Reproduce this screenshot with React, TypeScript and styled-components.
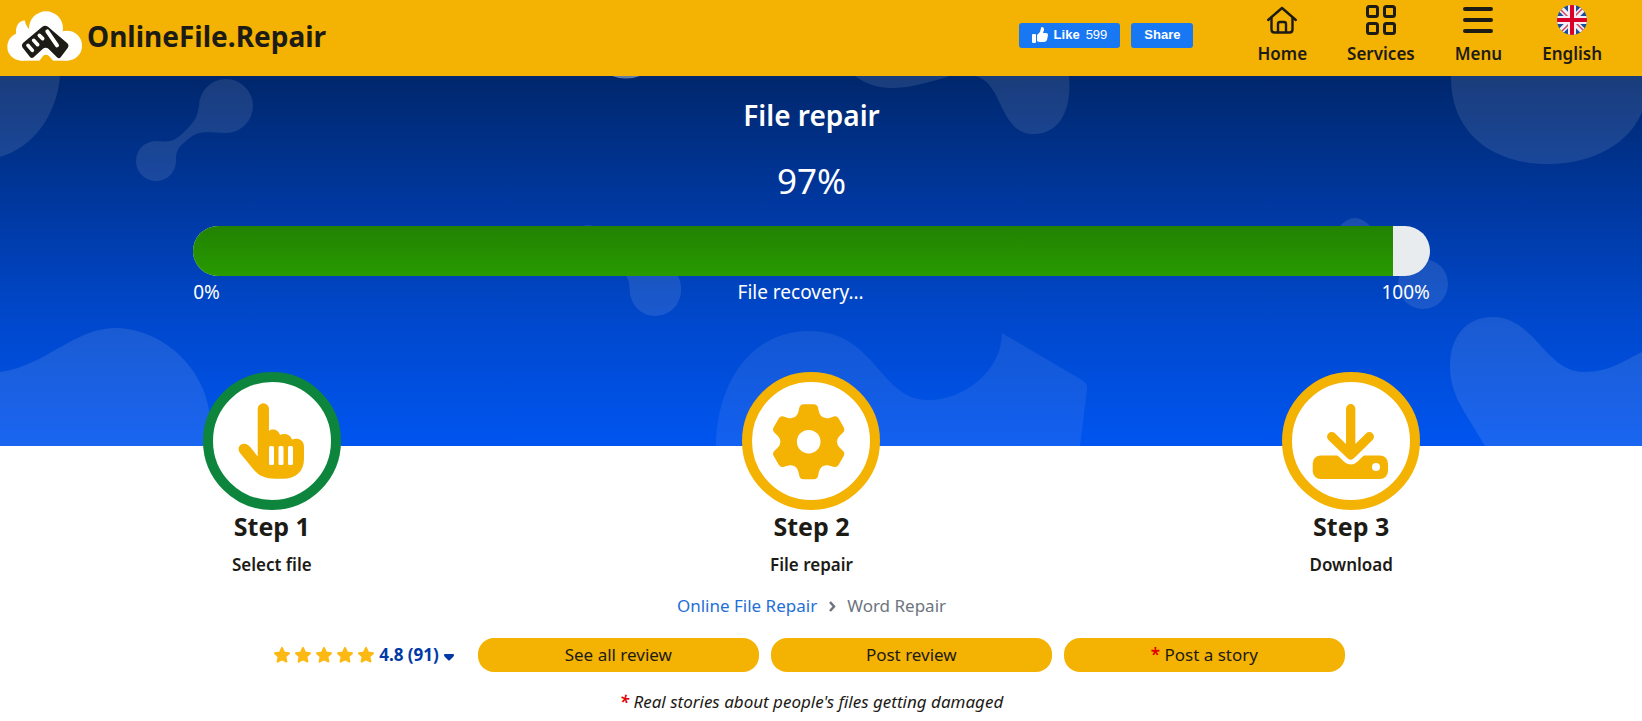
import React from "react";
import styled, { createGlobalStyle } from "styled-components";

const YELLOW = "#f4b202";
const INK = "#1d1b16";

const GlobalStyle = createGlobalStyle`
  *, *::before, *::after { box-sizing: border-box; }
  body {
    margin: 0;
    background: #fff;
    color: ${INK};
    font-family: "Segoe UI", "Noto Sans", "Open Sans", sans-serif;
    font-size: 17px;
    line-height: 24px;
  }
  button { font: inherit; color: inherit; border: 0; cursor: pointer; }
  a { color: inherit; text-decoration: none; }
`;

/* ---------- header ---------- */

const Header = styled.header`
  display: flex;
  align-items: center;
  min-height: 76px;
  padding: 0 40px 0 7px;
  background: ${YELLOW};
`;

const Brand = styled.a`
  display: flex;
  align-items: center;
  gap: 5px;
  margin-right: auto;
  padding-bottom: 4px;
  font-size: 28px;
  line-height: 40px;
  font-weight: 700;
`;

const Social = styled.div`
  display: flex;
  gap: 11px;
  margin: 0 64px 6px 0;
`;

const SocialButton = styled.button`
  display: flex;
  align-items: center;
  justify-content: center;
  gap: 6px;
  height: 25px;
  padding: 0 13px;
  border-radius: 3px;
  background: #1877f2;
  color: #fff;
  font-family: "Liberation Sans", Arial, sans-serif;
  font-size: 13px;
  font-weight: 700;
`;

const Count = styled.span`
  font-weight: 400;
`;

const Nav = styled.nav`
  display: flex;
  align-items: flex-start;
  gap: 40px;
  padding-bottom: 5px;
`;

const NavLink = styled.a`
  display: flex;
  flex-direction: column;
  align-items: center;
  gap: 7px;
  font-size: 17px;
  line-height: 24px;
  font-weight: 600;
`;

/* ---------- hero ---------- */

const Hero = styled.section`
  position: relative;
  min-height: 370px;
  padding: 19px 19px 0 0;
  background: linear-gradient(#00276c, #0038a0 35%, #0048cc 66%, #0055f0);
  color: #fff;
  text-align: center;
`;

const Backdrop = styled.svg`
  position: absolute;
  inset: 0;
  width: 100%;
  height: 100%;
`;

const HeroBody = styled.div`
  position: relative;
  width: 76.2%;
  margin: 0 auto;
`;

const Title = styled.h1`
  margin: 0;
  font-size: 28px;
  line-height: 40px;
  font-weight: 600;
`;

const Percent = styled.div`
  margin: 21px 0 20px;
  font-size: 35px;
  line-height: 50px;
`;

const Track = styled.div`
  height: 50px;
  overflow: hidden;
  border-radius: 25px;
  background: #e9ecef;
`;

const Fill = styled.div`
  height: 100%;
  background: linear-gradient(#228202, #289a00);
`;

const Scale = styled.div`
  display: flex;
  justify-content: space-between;
  padding-top: 4px;
  font-size: 19px;
  line-height: 24px;
`;

/* ---------- steps ---------- */

const Main = styled.main`
  padding-right: 19px;
`;

const Steps = styled.ol`
  position: relative;
  display: grid;
  grid-template-columns: repeat(3, 1fr);
  margin: -74px 0 0;
  padding: 0 2px;
  list-style: none;
  text-align: center;
`;

const Step = styled.li`
  display: flex;
  flex-direction: column;
  align-items: center;
`;

const Ring = styled.div<{ $done?: boolean }>`
  width: 138px;
  height: 138px;
  border: 10px solid ${(p) => (p.$done ? "#0e853d" : YELLOW)};
  border-radius: 50%;
  background: #fff;
  svg { display: block; }
`;

const StepName = styled.h2`
  margin: 0;
  font-size: 25px;
  line-height: 32px;
  font-weight: 700;
`;

const StepText = styled.p`
  margin: 11px 0 0;
  font-size: 17px;
  line-height: 24px;
  font-weight: 600;
`;

/* ---------- footer rows ---------- */

const Crumbs = styled.nav`
  display: flex;
  justify-content: center;
  align-items: center;
  gap: 9px;
  padding-top: 17px;
  color: #6c757d;
  a { color: #1f6fd6; }
`;

const Reviews = styled.div`
  display: flex;
  justify-content: center;
  align-items: center;
  gap: 12px;
  padding: 20px 4px 0 0;
`;

const Rating = styled.button`
  display: flex;
  align-items: center;
  gap: 5px;
  margin-right: 12px;
  padding: 0;
  background: none;
  color: #0039a6;
  font-weight: 700;
`;

const Stars = styled.span`
  display: flex;
  gap: 5px;
`;

const ReviewButton = styled.button`
  width: 281px;
  height: 34px;
  border-radius: 16px;
  background: ${YELLOW};
`;

const Star = styled.span`
  color: #e00000;
  font-weight: 600;
`;

const Note = styled.p`
  margin: 0;
  padding-top: 18px;
  font-style: italic;
  text-align: center;
`;

/* ---------- drawings ---------- */

const Logo = () => (
  <svg width="75" height="50" viewBox="21 31 225 150" aria-hidden="true">
    <g fill="#fff">
      <circle cx="138" cy="83" r="51" />
      <circle cx="201" cy="135" r="45" />
      <circle cx="64" cy="138" r="42" />
      <path d="M48 102 C46 72 58 62 74 59 Q76 72 84 82 L110 110 Z" />
      <rect x="62" y="96" width="140" height="84" />
    </g>
    <path d="M118 181 L129 166 Q137 158 147 166 L160 181 Z" fill={YELLOW} />
    <path
      d="M127 78 Q135 72 144 78 L202 128 Q208 134 203 142 L182 170 Q177 176 171 170 L146 145 Q137 138 128 145 L101 170 Q95 175 90 169 L67 140 Q63 133 69 127 Z"
      fill={INK}
    />
    <g stroke="#fff" strokeLinecap="round" fill="none">
      <path d="M84 134 L97 149" strokeWidth="11" />
      <path d="M101 119 L113 132" strokeWidth="11" />
      <path d="M118 104 L128 114" strokeWidth="11" />
      <path d="M142 92 L171 134" strokeWidth="12" />
    </g>
  </svg>
);

const HomeIcon = () => (
  <svg width="30" height="30" viewBox="0 0 30 30" fill="none" stroke={INK} strokeWidth="2.4" strokeLinecap="round" strokeLinejoin="round" aria-hidden="true">
    <path d="M1.2 15 L15 3 L28.8 15" />
    <path d="M4.5 13 V24.5 Q4.5 27.5 7.5 27.5 H22.5 Q25.5 27.5 25.5 24.5 V13" />
    <path d="M11 27 V19 Q11 17 13 17 H17 Q19 17 19 19 V27" />
  </svg>
);

const ServicesIcon = () => (
  <svg width="30" height="30" viewBox="0 0 30 30" fill="none" stroke={INK} strokeWidth="3" aria-hidden="true">
    <rect x="1.5" y="1.5" width="10" height="10" rx="2" />
    <rect x="18.5" y="1.5" width="10" height="10" rx="2" />
    <rect x="1.5" y="18.5" width="10" height="10" rx="2" />
    <rect x="18.5" y="18.5" width="10" height="10" rx="2" />
  </svg>
);

const MenuIcon = () => (
  <svg width="30" height="30" viewBox="0 0 30 30" stroke={INK} strokeWidth="4" strokeLinecap="round" aria-hidden="true">
    <path d="M2 4 H28 M2 15 H28 M2 26 H28" />
  </svg>
);

const FlagIcon = () => (
  <svg width="30" height="30" viewBox="0 0 30 30" aria-hidden="true">
    <clipPath id="flag-round">
      <circle cx="15" cy="15" r="15" />
    </clipPath>
    <g clipPath="url(#flag-round)">
      <rect width="30" height="30" fill="#1b4f9c" />
      <path d="M0 0 L30 30 M30 0 L0 30" stroke="#f4eef4" strokeWidth="6" />
      <path d="M0 1 L15 16 M30 29 L15 14 M29 0 L14 15 M1 30 L16 15" stroke="#d0455f" strokeWidth="1.5" />
      <path d="M15 0 V30 M0 15 H30" stroke="#f4eef4" strokeWidth="8" />
      <path d="M15 0 V30 M0 15 H30" stroke="#d80027" strokeWidth="4" />
    </g>
  </svg>
);

const ThumbIcon = () => (
  <svg width="16" height="16" viewBox="0 0 16 16" fill="#fff" aria-hidden="true">
    <rect x="0" y="7" width="4" height="9" rx="1" />
    <path d="M5 14 V8 L8 5 L9 1 Q9 0 10 0 Q12 0 12 3 L11 6 H14 Q16 6 16 8 L15 13 Q14 15 12 15 H8 Q6 15 5 14 Z" />
  </svg>
);

const HandIcon = () => (
  <svg width="118" height="118" viewBox="0 0 118 118" aria-hidden="true">
    <path
      d="M44.7 27 A5.65 5.65 0 0 1 56 27 V49 C59 46.5 65 47 67 53 C71 51 77 52 79 57.5 C84 55.5 91 57 91 65 V77 C91 90 82 96.7 70 96.7 H62 C53 96.7 46 94 41 88 L27 71 C24 67 26 62 31 61.8 C34 61.8 36 63.5 38 66 L44.7 74.5 Z"
      fill={YELLOW}
    />
    <g fill="#fff">
      <rect x="56" y="64" width="5" height="19" rx="1.5" />
      <rect x="65.5" y="64" width="5" height="19" rx="1.5" />
      <rect x="75" y="64" width="5" height="19" rx="1.5" />
    </g>
  </svg>
);

const GearIcon = () => (
  <svg width="118" height="118" viewBox="0 0 118 118" aria-hidden="true">
    <g transform="translate(56.7 59.7)" fill={YELLOW}>
      <circle r="27" />
      {[0, 60, 120, 180, 240, 300].map((angle) => (
        <path
          key={angle}
          transform={`rotate(${angle})`}
          d="M-14.2 -24.6 C-11 -26.5 -10.5 -29 -9.6 -33 Q-9 -37.5 -5 -37.5 H5 Q9 -37.5 9.6 -33 C10.5 -29 11 -26.5 14.2 -24.6 L0 0 Z"
        />
      ))}
      <circle r="11.8" fill="#fff" />
    </g>
  </svg>
);

const DownloadIcon = () => (
  <svg width="118" height="118" viewBox="0 0 118 118" fill="none" strokeLinecap="round" strokeLinejoin="round" aria-hidden="true">
    <rect x="20.7" y="73.5" width="75.3" height="23.5" rx="8" fill={YELLOW} />
    <path d="M39.7 54.7 L58.7 73 L77.3 54.7" stroke="#fff" strokeWidth="19" />
    <path d="M58.7 26.7 V72 M39.7 54.7 L58.7 73 L77.3 54.7" stroke={YELLOW} strokeWidth="9.3" />
    <circle cx="84" cy="85" r="4" fill="#fff" />
  </svg>
);

const StarIcon = () => (
  <svg width="16" height="16" viewBox="0 0 16 16" fill="#fdb913" stroke="#fdb913" strokeWidth="2" strokeLinejoin="round" aria-hidden="true">
    <path d="M8 1 L10.1 5.6 L15 6.2 L11.4 9.6 L12.4 14.6 L8 12.1 L3.6 14.6 L4.6 9.6 L1 6.2 L5.9 5.6 Z" />
  </svg>
);

const CaretIcon = () => (
  <svg width="10" height="16" viewBox="0 0 10 16" fill="#0039a6" aria-hidden="true">
    <path d="M0 8 Q0 7 1 7 H9 Q10 7 10 8 Q10 9 9 10 L6 13 Q5 14 4 13 L1 10 Q0 9 0 8 Z" />
  </svg>
);

const ChevronIcon = () => (
  <svg width="12" height="12" viewBox="0 0 12 12" fill="none" stroke="#6c757d" strokeWidth="2.5" aria-hidden="true">
    <path d="M4 2 L8 6.5 L4 11" />
  </svg>
);

const Shapes = () => (
  <Backdrop viewBox="0 0 1642 370" preserveAspectRatio="none" fill="#fff" fillOpacity="0.1" aria-hidden="true">
    <path d="M0 0 H60 C57 38 34 71 0 81 Z" />
    <path d="M226 3 A27 27 0 1 1 226 57 C205 56 198 54 187 64 C178 72 176 74 176 85 A20 20 0 1 1 156 65 C170 66 174 66 184 56 C196 45 197 40 199 30 A27 27 0 0 1 226 3 Z" />
    <path d="M612 0 H640 Q626 5 612 0 Z" fillOpacity="0.4" />
    <path d="M855 0 C880 18 905 14 950 0 Z" />
    <path d="M975 0 C1004 6 998 58 1034 58 C1062 58 1072 30 1069 0 Z" />
    <path d="M1451 0 C1450 55 1490 88 1548 88 C1595 88 1630 66 1642 36 V0 Z" />
    <path d="M580 151 Q588 147 596 151 Z" />
    <path d="M625 198 C632 208 628 214 631 222 C635 234 645 240 655 240 C672 240 682 226 681 212 C681 206 679 201 676 198 Z" />
    <path d="M1339 151 Q1355 133 1371 151 Z" />
    <circle cx="1423" cy="208" r="25" />
    <path d="M0 296 C45 290 75 252 115 252 C160 252 205 290 210 340 V370 H0 Z" />
    <path d="M716 370 C716 315 745 255 810 255 C875 255 880 324 928 324 C965 324 1002 294 1002 257 L1082 304 Q1088 307 1087 314 L1080 370 Z" fillOpacity="0.075" />
    <path d="M1485 370 C1465 335 1450 320 1450 290 C1450 262 1465 241 1493 241 C1535 241 1545 296 1584 296 C1610 296 1625 284 1642 276 V370 Z" />
  </Backdrop>
);

const steps = [
  { name: "Step 1", text: "Select file", icon: <HandIcon />, done: true },
  { name: "Step 2", text: "File repair", icon: <GearIcon />, done: false },
  { name: "Step 3", text: "Download", icon: <DownloadIcon />, done: false },
];

const links = [
  { label: "Home", icon: <HomeIcon /> },
  { label: "Services", icon: <ServicesIcon /> },
  { label: "Menu", icon: <MenuIcon /> },
  { label: "English", icon: <FlagIcon /> },
];

export default function App() {
  const progress = 97;
  return (
    <>
      <GlobalStyle />
      <Header>
        <Brand href="#home">
          <Logo />
          OnlineFile.Repair
        </Brand>
        <Social>
          <SocialButton type="button">
            <ThumbIcon />
            <span>Like</span>
            <Count>599</Count>
          </SocialButton>
          <SocialButton type="button">Share</SocialButton>
        </Social>
        <Nav>
          {links.map((link) => (
            <NavLink key={link.label} href={`#${link.label.toLowerCase()}`}>
              {link.icon}
              {link.label}
            </NavLink>
          ))}
        </Nav>
      </Header>

      <Hero>
        <Shapes />
        <HeroBody>
          <Title>File repair</Title>
          <Percent>{progress}%</Percent>
          <Track role="progressbar" aria-label="File recovery" aria-valuenow={progress} aria-valuemin={0} aria-valuemax={100}>
            <Fill style={{ width: `${progress}%` }} />
          </Track>
          <Scale>
            <span>0%</span>
            <span>File recovery...</span>
            <span>100%</span>
          </Scale>
        </HeroBody>
      </Hero>

      <Main>
        <Steps>
          {steps.map((step) => (
            <Step key={step.name}>
              <Ring $done={step.done}>{step.icon}</Ring>
              <StepName>{step.name}</StepName>
              <StepText>{step.text}</StepText>
            </Step>
          ))}
        </Steps>

        <Crumbs aria-label="Breadcrumb">
          <a href="#repair">Online File Repair</a>
          <ChevronIcon />
          <span>Word Repair</span>
        </Crumbs>

        <Reviews>
          <Rating type="button">
            <Stars>
              {[1, 2, 3, 4, 5].map((n) => (
                <StarIcon key={n} />
              ))}
            </Stars>
            4.8 (91)
            <CaretIcon />
          </Rating>
          <ReviewButton type="button">See all review</ReviewButton>
          <ReviewButton type="button">Post review</ReviewButton>
          <ReviewButton type="button">
            <Star>*</Star> Post a story
          </ReviewButton>
        </Reviews>

        <Note>
          <Star>*</Star> Real stories about people's files getting damaged
        </Note>
      </Main>
    </>
  );
}
